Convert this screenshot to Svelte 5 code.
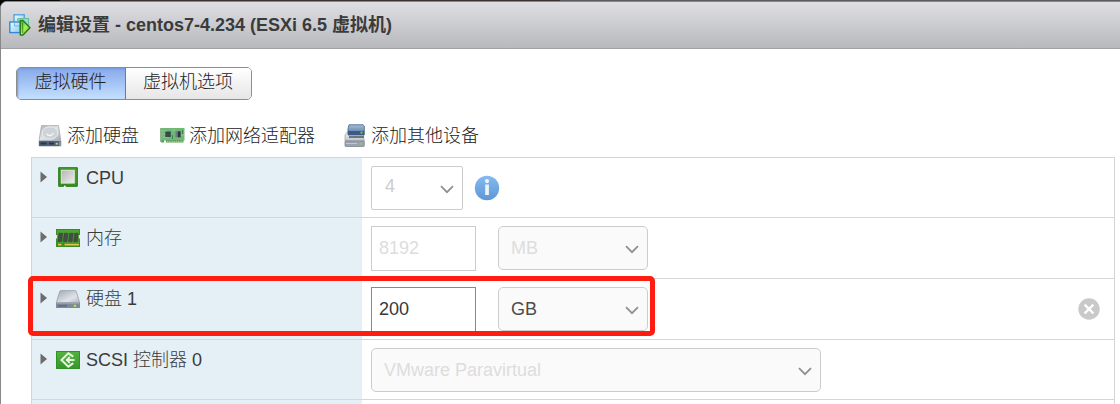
<script>
  const rows = [
    { icon: 'cpu', label: 'CPU', h: 60 },
    { icon: 'memory', label: '内存', h: 61 },
    { icon: 'disk', label: '硬盘 1', h: 61 },
    { icon: 'scsi', label: 'SCSI 控制器 0', h: 60 }
  ];
</script>

{#snippet chevron()}
  <svg class="chevron" width="14" height="9" viewBox="0 0 14 9"><path d="M1 1.2 7 7.2 13 1.2" fill="none" stroke="#8f8f8f" stroke-width="1.7" /></svg>
{/snippet}

<div class="dialog">
  <header>
    <svg width="22" height="23" viewBox="0 0 22 23">
      <defs>
        <linearGradient id="play" x2="1" y2="1"><stop stop-color="#4fb92c" /><stop offset=".5" stop-color="#a8f051" /><stop offset="1" stop-color="#49c41b" /></linearGradient>
        <linearGradient id="pane" x2="1" y2="1"><stop stop-color="#eefaff" /><stop offset="1" stop-color="#8dceeb" /></linearGradient>
      </defs>
      <rect x="5" y="1.8" width="10.2" height="11" fill="url(#pane)" stroke="#4c9de0" stroke-width="1.3" />
      <rect x="9" y="5.5" width="10.5" height="11" fill="#92dbc7" stroke="#65bea4" />
      <rect x=".8" y="9" width="10.5" height="10.6" fill="url(#pane)" stroke="#3586dd" stroke-width="1.4" />
      <path d="M5.5 9V13H11M8.5 6V9" fill="none" stroke="#65b8d9" />
      <path d="M11.3 7.5H14L21 14.8 14 22H11.3Z" fill="url(#play)" stroke="#287b18" stroke-width="1.4" stroke-linejoin="round" />
      <path d="M13.7 9V20" stroke="#287b18" stroke-width=".8" />
    </svg>
    <h1>编辑设置 - centos7-4.234 (ESXi 6.5 虚拟机)</h1>
  </header>

  <nav class="tabs">
    <button class="active">虚拟硬件</button>
    <button>虚拟机选项</button>
  </nav>

  <div class="toolbar">
    <span class="tool add-disk">
      <svg width="24" height="22" viewBox="0 0 24 22">
        <defs>
          <linearGradient id="drive" x2="1" y2="1"><stop stop-color="#aeb4bd" /><stop offset=".5" stop-color="#e2e5e8" /><stop offset="1" stop-color="#a3a8b0" /></linearGradient>
        </defs>
        <path d="M3.5 .6H20.5L22.8 15.5H1Z" fill="url(#drive)" stroke="#a5acb4" stroke-width=".8" />
        <ellipse cx="12" cy="8" rx="7.8" ry="6.2" fill="#ced3d8" stroke="#e8ebed" />
        <path d="M8.5 9Q12.5 12.5 15.5 8" fill="none" stroke="#f7f8f9" stroke-width="1.3" />
        <rect x=".8" y="16" width="22.4" height="5.2" rx=".6" fill="#53617a" />
        <path d="M2.5 18.5H8.5M11 18.5H16" stroke="#29364d" stroke-width="2" />
        <rect x="17.8" y="17.8" width="2" height="1.8" fill="#b9e332" />
        <rect x="21" y="16.5" width="2" height="4.4" fill="#8a929f" />
      </svg>
      <span>添加硬盘</span>
    </span>
    <span class="tool add-nic">
      <svg width="25" height="17" viewBox="0 0 25 17">
        <rect x="1" y="1" width="23.5" height="12.5" fill="#71b876" />
        <path d="M1 13V15.5H4V13M6 13V15.5H23.5V13" fill="#579e60" />
        <path d="M7 14.5H23" stroke="#b5c978" stroke-width="1.7" stroke-dasharray="1.3 .9" />
        <rect x="0" y="1" width="1.6" height="14" fill="#91b494" />
        <path d="M2 4H7M2 7H6M12 3H15M3 10H8M20 8H24" stroke="#93c990" />
        <rect x="5.3" y="4.5" width="5.5" height="5.5" fill="#394650" />
        <rect x="15.5" y="4.3" width="2.4" height="6" fill="#6b7882" />
        <rect x="17.9" y="4.3" width="2.7" height="6" fill="#28333e" />
        <path d="M22.5 3V7M12.5 8V12" stroke="#388055" />
      </svg>
      <span>添加网络适配器</span>
    </span>
    <span class="tool add-other">
      <svg width="22" height="24" viewBox="0 0 22 24">
        <defs>
          <linearGradient id="blueBox" x2="0" y2="1"><stop stop-color="#a5bedf" /><stop offset="1" stop-color="#4d6e9c" /></linearGradient>
          <linearGradient id="greyBox" x2="0" y2="1"><stop stop-color="#f2f3f4" /><stop offset="1" stop-color="#bdc2c8" /></linearGradient>
        </defs>
        <path d="M3 8H19L20.2 17H1V11Z" fill="url(#greyBox)" stroke="#a6acb3" stroke-width=".8" />
        <path d="M5 .8H19L20.3 2V11H4V5Z" fill="url(#blueBox)" stroke="#536b8d" stroke-width=".9" />
        <rect x="4" y="7" width="16" height="4" fill="#3b5b87" />
        <path d="M5 12H20V14H5Z" fill="#6d7580" />
        <rect x="1" y="17" width="19.3" height="5.5" rx=".8" fill="#99a2ad" stroke="#7d8793" stroke-width=".8" />
        <path d="M2 19.5H13" stroke="#c0c7ce" />
        <path d="M16.5 8.7H18.5M15.5 19.7H18" stroke="#77de27" stroke-width="1.8" />
      </svg>
      <span>添加其他设备</span>
    </span>
  </div>

  <div class="table">
    {#each rows as row}
      <div class="row" style="height:{row.h}px">
        <div class="label">
          <svg class="arrow" width="8" height="12" viewBox="0 0 8 12"><path d="M.5 .4 7 6 .5 11.6Z" fill="#6c6c6c" /></svg>
          <span class="icon {row.icon}">
            {#if row.icon === 'cpu'}
              <svg width="20" height="20" viewBox="0 0 20 20">
                <defs><linearGradient id="chip" x2="1" y2="1"><stop stop-color="#b4b5b4" /><stop offset="1" stop-color="#ededed" /></linearGradient></defs>
                <path d="M.7 .7H19.3V19.3H8V18H5.5V19.3H.7Z" fill="#37911f" stroke="#2a7519" />
                <path d="M2 2H18V16" fill="none" stroke="#51a23b" />
                <rect x="3.3" y="3.3" width="13" height="12.8" fill="url(#chip)" stroke="#dcebd4" />
              </svg>
            {:else if row.icon === 'memory'}
              <svg width="24" height="19" viewBox="0 0 24 19">
                <rect x=".5" y=".5" width="23" height="17" fill="#4da333" stroke="#3b8a25" />
                <path d="M.5 14H23.5V18H8.5V16.5H6V18H.5Z" fill="#368b22" />
                <path d="M2 15.6H5.5M8.5 15.6H23" stroke="#e5c453" stroke-width="1.8" />
                <path d="M2.8 4.2H6.8L5.8 12.8H1.8ZM8.2 4.2H12L11 12.8H7.2ZM13.4 4.2H17.2L16.2 12.8H12.4ZM18.6 4.2H22.2L21.5 12.8H17.6Z" fill="#454b46" stroke="#2d4f28" stroke-width=".5" />
                <rect x="0" y="6" width="1.1" height="3.5" fill="#dcebd8" /><rect x="22.9" y="6" width="1.1" height="3.5" fill="#dcebd8" />
              </svg>
            {:else if row.icon === 'disk'}
              <svg width="24" height="19" viewBox="0 0 24 19">
                <defs><linearGradient id="lid" x2="1" y2="1"><stop stop-color="#9fa7b4" /><stop offset=".65" stop-color="#e0e3e7" /><stop offset="1" stop-color="#b0b6c0" /></linearGradient></defs>
                <path d="M5 .6H19Q20 .6 20.5 2L23.6 12.5H.4L3.5 2Q4 .6 5 .6Z" fill="url(#lid)" stroke="#979fab" stroke-width=".8" />
                <path d="M0 12.8H24V18H0Z" fill="#808b9a" />
                <path d="M1 13.2H23" stroke="#aab1bc" stroke-width=".8" />
                <path d="M2 15.8H11" stroke="#647185" stroke-width="2" />
                <rect x="17.8" y="14.8" width="2.2" height="2" fill="#b6ee2c" />
              </svg>
            {:else}
              <svg width="24" height="18" viewBox="0 0 24 18">
                <defs><linearGradient id="card" x2="0" y2="1"><stop stop-color="#53b33f" /><stop offset="1" stop-color="#34982a" /></linearGradient></defs>
                <rect x=".5" y=".5" width="23" height="17" fill="url(#card)" stroke="#329028" />
                <path d="M17.3 5.7 12.3 2.3 5.5 9 12.3 15.7 17.3 12.2" fill="none" stroke="#e5f3dc" stroke-width="2.1" />
                <path d="M13.8 6 10.7 9 13.8 12M11 9H18.5" fill="none" stroke="#e5f3dc" stroke-width="1.9" />
              </svg>
            {/if}
          </span>
          <span class="name">{row.label}</span>
        </div>
        <div class="value">
          {#if row.icon === 'cpu'}
            <div class="select cores"><span>4</span>{@render chevron()}</div>
            <svg class="info" width="26" height="26" viewBox="0 0 26 26">
              <defs><linearGradient id="infoFill" x2="0" y2="1"><stop stop-color="#86b9f1" /><stop offset="1" stop-color="#5d98d5" /></linearGradient></defs>
              <circle cx="13" cy="13" r="12.2" fill="url(#infoFill)" />
              <circle cx="13" cy="6.1" r="2.1" fill="#edf3f9" />
              <rect x="11.2" y="9.5" width="3.7" height="10.5" fill="#edf3f9" />
            </svg>
          {:else if row.icon === 'memory'}
            <div class="field">8192</div>
            <div class="select unit"><span>MB</span>{@render chevron()}</div>
          {:else if row.icon === 'disk'}
            <div class="field enabled">200</div>
            <div class="select unit enabled"><span>GB</span>{@render chevron()}</div>
            <svg class="remove" width="22" height="22" viewBox="0 0 22 22">
              <circle cx="11" cy="11" r="10.7" fill="#c9c9c9" />
              <path d="M6.6 6.6 15.4 15.4M15.4 6.6 6.6 15.4" stroke="#fff" stroke-width="2.3" />
            </svg>
          {:else}
            <div class="select adapter"><span>VMware Paravirtual</span>{@render chevron()}</div>
          {/if}
        </div>
        {#if row.icon === 'disk'}<div class="highlight"></div>{/if}
      </div>
    {/each}
    <div class="row rest"><div class="label"></div></div>
  </div>
</div>

<style>
  :global(body) { background: linear-gradient(90deg, #080808 0 60px, #39342f 60px 560px, #5c5c5c 560px); overflow: hidden; }
  * { box-sizing: border-box; }
  .dialog {
    height: 403px; margin-top: 1px; overflow: hidden; background: #fff;
    border: solid #888; border-width: 1px 0 0 1px; border-radius: 7px 0 0 0;
    font-family: "Liberation Sans", "Noto Sans CJK SC", sans-serif; font-size: 18px; color: #3b3b3b;
  }
  header {
    height: 47px; padding: 11px 0 0 8px; display: flex; align-items: flex-start; gap: 7px;
    background: linear-gradient(#dfdfe3, #b8b9bd); border-bottom: 1px solid #a1a1a3;
  }
  h1 { margin: 0; font-size: 18px; font-weight: 700; line-height: 24px; white-space: nowrap; }
  .tabs { display: flex; margin: 18px 0 0 15px; height: 33px; width: 236px; border: 1px solid #8d8d8d; border-radius: 5px; overflow: hidden; }
  .tabs button {
    border: 0; margin: 0; padding: 0 1px 2px 0; width: 125px; font: inherit; font-weight: 300; color: #222;
    line-height: 29px; background: linear-gradient(#fff, #e6e6e6);
  }
  .tabs .active { width: 109px; border-right: 1px solid #747b87; background: linear-gradient(#86a9ea, #c4e0ff); box-shadow: inset 1px 1px 2px #7797d5; }
  .toolbar { display: flex; margin: 22px 0 0 37px; height: 35px; font-weight: 300; line-height: 28px; color: #222; }
  .tool { display: flex; align-items: flex-start; gap: 5px; white-space: nowrap; }
  .add-disk { width: 121px; }
  .add-disk svg { margin-top: 3px; }
  .add-nic { width: 185px; gap: 4px; }
  .add-nic svg { margin-top: 5px; margin-left: 1px; }
  .add-other svg { margin-top: 2px; }
  .table { width: 1084px; margin-left: 30px; border: 1px solid #d3d6d8; border-bottom: 0; }
  .row { position: relative; display: flex; border-bottom: 1px solid #d5d6d7; }
  .rest { height: 5px; border: 0; }
  .label { width: 330px; background: #e4eff6; display: flex; align-items: flex-start; padding: 13px 0 0 8px; }
  .arrow { flex: none; }
  .icon { width: 34px; flex: none; padding-left: 8px; margin-top: -4px; height: 20px; }
  .icon svg { display: block; }
  .cpu svg { margin-left: 2px; }
  .memory svg { margin-top: 2px; }
  .disk svg { margin-top: 2px; }
  .scsi svg { margin-top: 2px; }
  .name { margin: -6px 0 0 4px; line-height: 26px; font-weight: 300; }
  .value { flex: 1; display: flex; align-items: flex-start; padding: 8px 14px 0 9px; }
  .select {
    height: 44px; border: 1px solid #ccc; border-radius: 5px; background: #fafafa; color: #ddd;
    display: flex; align-items: center; justify-content: space-between; padding: 0 8px 0 12px;
  }
  .chevron { margin-top: 3px; }
  .cores { width: 92px; border-radius: 2px; background: #fff; color: #ccc; padding-left: 13px; }
  .cores span { margin-top: -3px; }
  .info { margin: 9px 0 0 11px; }
  .field { width: 105px; height: 45px; border: 1px solid #ccc; padding-left: 7px; line-height: 43px; color: #ddd; background: #fff; }
  .field.enabled { border-color: #888; color: #383838; }
  .unit { width: 150px; margin-left: 22px; }
  .unit.enabled { color: #4c4c4c; }
  .adapter { width: 450px; }
  .remove { margin: 11px 0 0 auto; }
  .highlight { position: absolute; left: -4px; top: -3px; width: 627px; height: 60px; border: 5px solid #ff1c10; border-radius: 5px; }
</style>
